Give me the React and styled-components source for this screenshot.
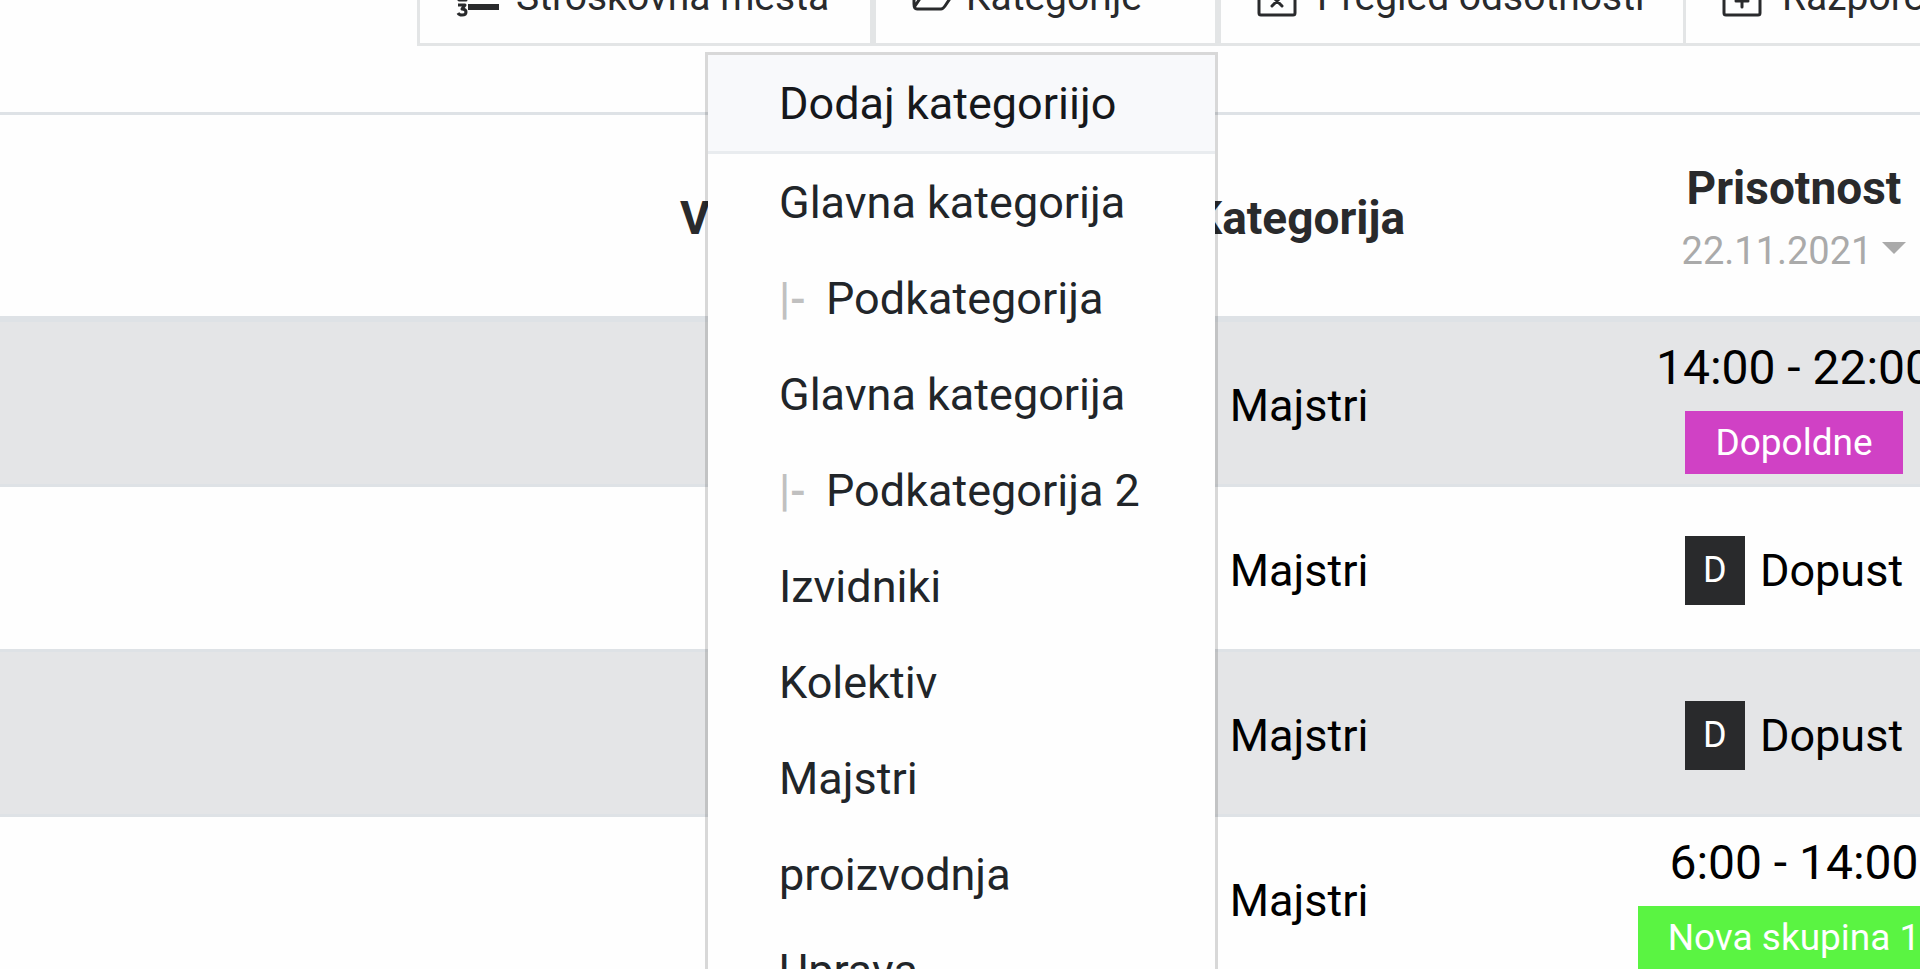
import React from "react";
import styled, { createGlobalStyle } from "styled-components";

const GlobalStyle = createGlobalStyle`
  *, *::before, *::after { box-sizing: border-box; }
  body {
    margin: 0;
    background: #fefefe;
    color: #000;
    font-family: Roboto, "Open Sans", sans-serif;
    font-size: 45px;
  }
  button { font: inherit; color: inherit; }
`;

const Page = styled.div`
  height: 100vh;
  overflow: hidden;
`;

const Toolbar = styled.nav`
  display: flex;
  margin-top: -52px;
  padding-left: 417px;
`;

const ToolItem = styled.div`
  position: relative;
  flex: none;
  margin-left: ${(p) => (p.$joined ? "-3px" : "0")};
`;

const ToolButton = styled.button`
  display: flex;
  align-items: center;
  gap: ${(p) => p.$gap || 18}px;
  min-width: ${(p) => p.$width}px;
  padding: 16px 36px;
  border: 3px solid #e3e5e6;
  background: transparent;
  color: #292a2c;
  font-size: 39px;
  line-height: 60px;
  white-space: nowrap;
`;

const ToolIcon = styled.svg`
  flex: none;
  width: 42px;
  height: 42px;
  fill: none;
  stroke: currentColor;
  stroke-width: 3;
  stroke-linecap: round;
  stroke-linejoin: round;
  overflow: visible;
`;

const Menu = styled.div`
  position: absolute;
  z-index: 2;
  top: calc(100% + 6px);
  right: 0;
  min-width: 513px;
  border: 3px solid rgba(0, 0, 0, 0.15);
  background: #fefefe;
  background-clip: padding-box;
`;

const MenuItem = styled.a`
  display: block;
  padding: 13px 71px 11px;
  background: ${(p) => (p.$active ? "#f8f9fb" : "transparent")};
  color: ${(p) => (p.$active ? "#16181b" : "#212529")};
  line-height: 72px;
  text-decoration: none;
  white-space: nowrap;
`;

const MenuDivider = styled.div`
  height: 3px;
  background: #e9ecef;
`;

const Branch = styled.span`
  display: inline-block;
  min-width: 47px;
  color: #c0c0c0;
  font-weight: 500;
`;

const Table = styled.table`
  width: calc(100% + 121px);
  margin-top: 66px;
  border-spacing: 0;
  table-layout: fixed;
  white-space: nowrap;
`;

const Col = styled.col`
  width: ${(p) => p.$width}px;
`;

const HeadCell = styled.th`
  height: 210px;
  padding: 5px 0 0;
  border-top: 3px solid #dee2e6;
  border-bottom: 6px solid #dee2e6;
  color: #292a2c;
  font-size: 46px;
  font-weight: 700;
  line-height: 66px;
  text-align: ${(p) => p.$align || "center"};
`;

const Row = styled.tr`
  background: ${(p) => (p.$shaded ? "#e4e5e7" : "transparent")};
`;

const Cell = styled.td`
  height: 165px;
  padding: 5px 0 0;
  border-bottom: 3px solid #dee2e6;
  line-height: 60px;
  text-align: center;
`;

const DateButton = styled.button`
  display: flex;
  align-items: center;
  gap: 10px;
  margin: 0 auto;
  padding: 0;
  border: 0;
  background: none;
  color: #aaa;
  font-size: 38px;
  font-weight: 400;
  line-height: 60px;
`;

const Caret = styled.svg`
  width: 24px;
  height: 12px;
  margin-bottom: 6px;
  fill: currentColor;
`;

const Shift = styled.div`
  display: flex;
  flex-direction: column;
  align-items: center;
  gap: 13px;
`;

const Time = styled.span`
  font-size: 48px;
  line-height: 60px;
`;

const ShiftBadge = styled.span`
  padding: 0 30px;
  background: ${(p) => p.$color};
  color: #fff;
  font-size: 37px;
  line-height: 63px;
`;

const Absence = styled.div`
  display: flex;
  align-items: center;
  justify-content: center;
  gap: 15px;
`;

const AbsenceCode = styled.span`
  width: 60px;
  background: #292a2c;
  color: #fff;
  font-size: 36px;
  line-height: 69px;
`;

const ListIcon = () => (
  <ToolIcon viewBox="0 0 42 42" aria-hidden="true">
    <path d="M12 5h31M12 18h31M12 31h31" strokeWidth="6" strokeLinecap="butt" />
    <path d="M3 2h3v9M2 11h8M2 15h7v3l-6 6h7" strokeWidth="3" />
    <path d="M2 29h7l-3 4q4 0 4 3q0 3-4 3q-3 0-4-2" strokeWidth="3" strokeLinecap="butt" />
  </ToolIcon>
);

const FolderIcon = () => (
  <ToolIcon viewBox="0 0 42 42" aria-hidden="true">
    <path d="M2 28V7q0-3 3-3h9l5 5h13q3 0 3 3v4M3 30l8-12q1-2 3-2h26q2 0 1 2l-8 12q-2 3-4 3H5q-3 0-3-5" />
  </ToolIcon>
);

const CalendarIcon = ({ children }) => (
  <ToolIcon viewBox="0 0 42 42" aria-hidden="true">
    <rect x="2" y="6" width="36" height="33" rx="2" />
    <path d="M2 14h36M11 2v7M29 2v7" />
    {children}
  </ToolIcon>
);

const MENU = [
  { label: "Glavna kategorija" },
  { label: "Podkategorija", sub: true },
  { label: "Glavna kategorija" },
  { label: "Podkategorija 2", sub: true },
  { label: "Izvidniki" },
  { label: "Kolektiv" },
  { label: "Majstri" },
  { label: "proizvodnja" },
  { label: "Uprava" },
];

const ROWS = [
  { category: "Majstri", time: "14:00 - 22:00", shift: "Dopoldne", color: "#d041c5" },
  { category: "Majstri", code: "D", absence: "Dopust" },
  { category: "Majstri", code: "D", absence: "Dopust" },
  { category: "Majstri", time: "6:00 - 14:00", shift: "Nova skupina 1", color: "#5af442" },
];

const CategoryMenu = () => (
  <Menu>
    <MenuItem href="#dodaj" $active>Dodaj kategoriijo</MenuItem>
    <MenuDivider />
    {MENU.map((item, i) => (
      <MenuItem href="#kategorija" key={i}>
        {item.sub && <Branch>|-</Branch>}
        {item.label}
      </MenuItem>
    ))}
  </Menu>
);

export default function App() {
  return (
    <Page>
      <GlobalStyle />
      <Toolbar>
        <ToolItem>
          <ToolButton type="button" $width={456}>
            <ListIcon />
            Stroškovna mesta
          </ToolButton>
        </ToolItem>
        <ToolItem>
          <ToolButton type="button" $width={345} $gap={12} aria-expanded="true">
            <FolderIcon />
            Kategorije
          </ToolButton>
          <CategoryMenu />
        </ToolItem>
        <ToolItem>
          <ToolButton type="button" $width={468}>
            <CalendarIcon>
              <path d="M15 20l10 10M25 20l-10 10" />
            </CalendarIcon>
            Pregled odsotnosti
          </ToolButton>
        </ToolItem>
        <ToolItem $joined>
          <ToolButton type="button">
            <CalendarIcon>
              <path d="M14 25h12M20 19v12" />
            </CalendarIcon>
            Razpored
          </ToolButton>
        </ToolItem>
      </Toolbar>

      <Table>
        <colgroup>
          <col />
          <Col $width={371} />
          <Col $width={496} />
          <Col $width={494} />
        </colgroup>
        <thead>
          <tr>
            <HeadCell />
            <HeadCell $align="left">V</HeadCell>
            <HeadCell>Kategorija</HeadCell>
            <HeadCell>
              Prisotnost
              <DateButton type="button">
                22.11.2021
                <Caret viewBox="0 0 24 12" aria-hidden="true">
                  <path d="M0 0h24L12 12z" />
                </Caret>
              </DateButton>
            </HeadCell>
          </tr>
        </thead>
        <tbody>
          {ROWS.map((row, i) => (
            <Row key={i} $shaded={i % 2 === 0}>
              <Cell />
              <Cell />
              <Cell>{row.category}</Cell>
              <Cell>
                {row.time ? (
                  <Shift>
                    <Time>{row.time}</Time>
                    <ShiftBadge $color={row.color}>{row.shift}</ShiftBadge>
                  </Shift>
                ) : (
                  <Absence>
                    <AbsenceCode>{row.code}</AbsenceCode>
                    {row.absence}
                  </Absence>
                )}
              </Cell>
            </Row>
          ))}
        </tbody>
      </Table>
    </Page>
  );
}
